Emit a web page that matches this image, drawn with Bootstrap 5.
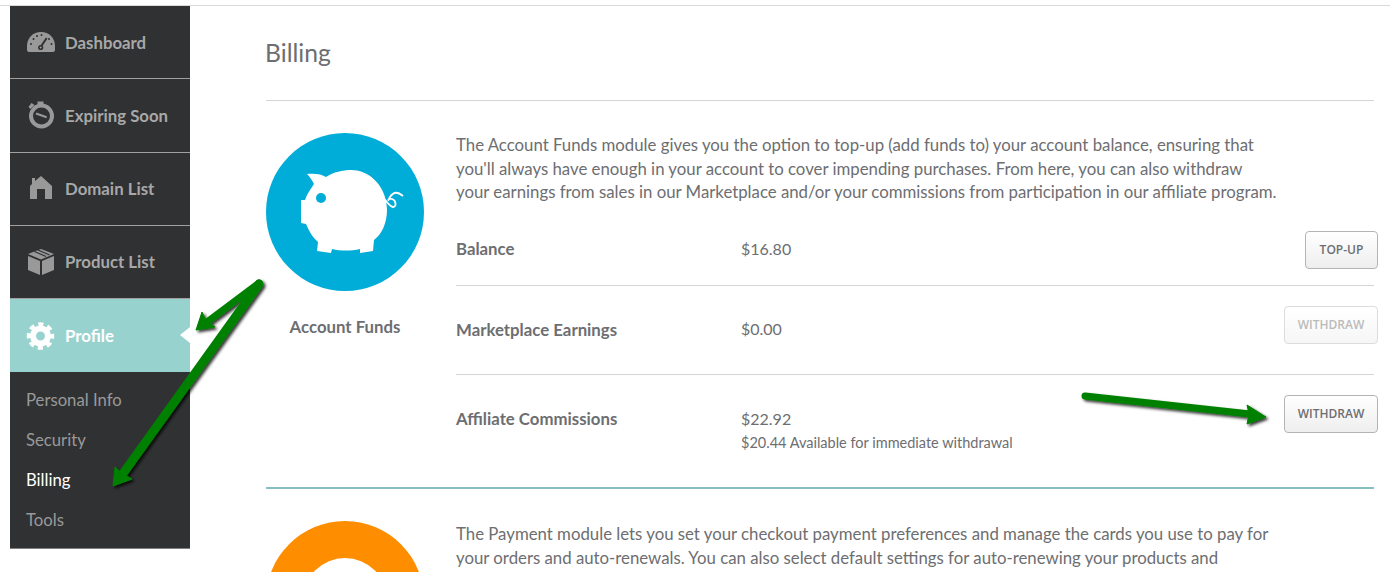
<!DOCTYPE html>
<html lang="en">
<head>
  <meta charset="UTF-8" />
  <title>Billing</title>
  <meta name="viewport" content="width=device-width, initial-scale=1" />
  <link href="https://cdn.jsdelivr.net/npm/bootstrap@5.3.3/dist/css/bootstrap.min.css" rel="stylesheet" />
  <style>
    html, body { height: 572px; overflow: hidden; }
    body {
      font-family: "Lato", "Liberation Sans", sans-serif;
      color: #6d6e71;
      background: #fff;
      position: relative;
    }
    .page-wrap { border-top: 1px solid #d9d9d9; margin-top: 5px; padding-left: 10px; height: 567px; overflow: hidden; }
    .side-menu { width: 180px; background: #303133; height: 543px; flex-shrink: 0; border-bottom: 1px solid #808080; }
    .side-item {
      height: 73.25px; display: flex; align-items: center; gap: 9px; padding-left: 16px;
      color: #a8a8a8; font-weight: 700; font-size: 16.8px; text-decoration: none;
      border-bottom: 1px solid #a0a0a0;
    }
    .side-item svg { width: 30px; height: 30px; flex-shrink: 0; }
    .side-item.active-item { background: #98d2cf; color: #fff; border-bottom: 0; position: relative; height: 73px; }
    .side-item.active-item::after {
      content: ""; position: absolute; right: 0; top: 28px;
      border: 8px solid transparent; border-left: 0; border-right: 10px solid #fff;
    }
    .sub-menu { padding-top: 8px; }
    .sub-item { display: block; height: 40px; line-height: 40px; padding-left: 16px; color: #999; font-size: 16.7px; text-decoration: none; }
    .sub-item.current { color: #fff; }
    .main-area { margin-left: 76px; width: 1108px; }
    .page-title { font-size: 24.7px; font-weight: 400; color: #6d6e71; margin: 0; height: 95px; padding-top: 32px; line-height: 30px; border-bottom: 1px solid #d4d4d4; text-indent: -1px; }
    .module-row { display: flex; gap: 32px; padding-top: 32px; }
    .module-side { width: 158px; flex-shrink: 0; text-align: center; }
    .round-icon { width: 158px; height: 158px; border-radius: 50%; display: block; }
    .round-blue { background: #00acd8; }
    .round-orange { background: #ff8d00; }
    .module-name { font-weight: 700; font-size: 16.8px; margin-top: 26px; line-height: 20px; }
    .module-body { flex: 1; min-width: 0; }
    .module-text { font-size: 16.8px; line-height: 23.6px; margin: 0; color: #6d6e71; white-space: nowrap; }
    .module-text.pay-text { padding-top: 1px; line-height: 24px; }
    .fund-row { display: flex; align-items: flex-start; border-bottom: 1px solid #d4d4d4; }
    .fund-row.last-row { border-bottom: 0; }
    .fund-label { width: 285px; font-weight: 700; font-size: 16.8px; line-height: 20px; flex-shrink: 0; }
    .fund-value { font-size: 16px; line-height: 20px; flex: 1; }
    .fund-note { font-size: 14.5px; line-height: 18px; margin-top: 5px; }
    .fund-btn {
      width: 94px; height: 38px; padding: 0; font-family: "Open Sans", "Liberation Sans", sans-serif; font-size: 12px; font-weight: 600; color: #6d6e71;
      background: linear-gradient(#fff, #eeeeee); border: 1px solid #b4b4b4; border-radius: 4px;
      margin-right: -4px; flex-shrink: 0; text-transform: uppercase;
    }
    .fund-btn.top-btn { width: 73px; }
    .fund-btn:disabled { color: #bbb; border-color: #dcdcdc; background: linear-gradient(#fff, #f6f6f6); opacity: 1; }
    .row-one { height: 82px; padding-top: 27px; }
    .row-one .fund-label, .row-one .fund-value { padding-top: 8px; }
    .row-two { height: 89px; padding-top: 20px; }
    .row-two .fund-label { padding-top: 14px; }
    .row-two .fund-value { padding-top: 13px; }
    .row-three { height: 113px; padding-top: 20px; }
    .row-three .fund-label, .row-three .fund-value { padding-top: 14px; }
    .module-split { border-top: 2px solid #87bfc0; margin: -1px 0 0; opacity: 1; }
    .arrow-layer { position: absolute; left: 0; top: 0; width: 1390px; height: 572px; pointer-events: none; }
  </style>
</head>
<body>
  <div class="page-wrap d-flex">
    <nav class="side-menu">
      <a class="side-item" href="#">
        <svg viewBox="0 0 30 30"><path fill="#999" d="M1 23v-4C1 11 7 5 15 5s14 6 14 14v4c0 1-1 2-2 2H3c-1 0-2-1-2-2z"/><path fill="none" stroke="#303133" stroke-width="2" d="M15 19.500 20.700 11"/><circle cx="14.700" cy="20.500" r="2.600" fill="#303133"/><circle cx="14.700" cy="20.500" r="1" fill="#999"/><g fill="#303133"><circle cx="5" cy="17" r="1"/><circle cx="7.500" cy="12" r="1"/><circle cx="11" cy="9" r="1"/><circle cx="15.500" cy="8" r="1"/><circle cx="23" cy="12" r="1"/><circle cx="25.500" cy="17" r="1"/></g></svg>
        Dashboard
      </a>
      <a class="side-item" href="#">
        <svg viewBox="0 0 30 30"><circle cx="15.500" cy="16" r="10.500" fill="none" stroke="#999" stroke-width="4"/><path d="M10 13.500 20.700 17.300" stroke="#999" stroke-width="2" fill="none"/><path fill="#999" d="M11.500 1.500h6v3h-6zM2.500 7l3-4 3 2-4 4z"/></svg>
        Expiring Soon
      </a>
      <a class="side-item" href="#">
        <svg viewBox="0 0 30 30"><path fill="#999" d="M15 2 26 12v13h-7V15h-8v10H4V12l2-2V4h3v3z"/></svg>
        Domain List
      </a>
      <a class="side-item" href="#">
        <svg viewBox="0 0 30 30"><path fill="#999" d="M15 2 28 7 15 12.500 2 7zM2 9l12 5v14L2 23zM28 9 16 14v14l12-5z"/><path fill="none" stroke="#303133" stroke-width="1.200" d="M8.500 4.500 20 9.500M12 3l11.500 5"/></svg>
        Product List
      </a>
      <a class="side-item active-item" href="#">
        <svg viewBox="0 0 30 30"><circle cx="14.500" cy="15" r="7.500" fill="none" stroke="#fff" stroke-width="6"/><circle cx="14.500" cy="15" r="11.500" fill="none" stroke="#fff" stroke-width="4.500" stroke-dasharray="5 4.030" stroke-dashoffset="2.500"/></svg>
        Profile
      </a>
      <div class="sub-menu">
        <a class="sub-item" href="#">Personal Info</a>
        <a class="sub-item" href="#">Security</a>
        <a class="sub-item current" href="#">Billing</a>
        <a class="sub-item" href="#">Tools</a>
      </div>
    </nav>
    <main class="main-area">
      <h1 class="page-title">Billing</h1>
      <section class="module-row">
        <div class="module-side">
          <svg class="round-icon round-blue" viewBox="0 0 158 158">
            <path fill="#fff" d="M41 41C48 40 56 41 60 44 68 39 76 37 85 37 105 37 121 55 121 77 121 91 115 102 108 107L107 118 94 120 94 116C85 118 75 118 66 116L65 120 51 118 52 109C47 105 43 98 40 91L35 90V67L39 67C41 61 44 57 48 51 46 47 44 44 41 41Z"/>
            <circle cx="55" cy="65" r="5" fill="#00acd8"/>
            <path fill="none" stroke="#fff" stroke-width="1.800" d="M116 64C120 66 122 73 127 74 131 74 130 67 126 66 122 65 121 70 124 64 128 58 132 59 137 63"/>
          </svg>
          <div class="module-name">Account Funds</div>
        </div>
        <div class="module-body">
          <p class="module-text">The Account Funds module gives you the option to top-up (add funds to) your account balance, ensuring that<br>you'll always have enough in your account to cover impending purchases. From here, you can also withdraw<br>your earnings from sales in our Marketplace and/or your commissions from participation in our affiliate program.</p>
          <div class="fund-row row-one">
            <div class="fund-label">Balance</div>
            <div class="fund-value">$16.80</div>
            <button class="fund-btn top-btn" type="button">Top-up</button>
          </div>
          <div class="fund-row row-two">
            <div class="fund-label">Marketplace Earnings</div>
            <div class="fund-value">$0.00</div>
            <button class="fund-btn" type="button" disabled>Withdraw</button>
          </div>
          <div class="fund-row row-three last-row">
            <div class="fund-label">Affiliate Commissions</div>
            <div class="fund-value">$22.92<div class="fund-note">$20.44 Available for immediate withdrawal</div></div>
            <button class="fund-btn" type="button">Withdraw</button>
          </div>
        </div>
      </section>
      <hr class="module-split">
      <section class="module-row">
        <div class="module-side">
          <svg class="round-icon round-orange" viewBox="0 0 158 158"><circle cx="79" cy="79" r="42" fill="#fff"/></svg>
        </div>
        <div class="module-body">
          <p class="module-text pay-text">The Payment module lets you set your checkout payment preferences and manage the cards you use to pay for<br>your orders and auto-renewals. You can also select default settings for auto-renewing your products and</p>
        </div>
      </section>
    </main>
  </div>
  <svg class="arrow-layer" viewBox="0 0 1390 572">
    <defs><filter id="arrowShadow" x="-20%" y="-20%" width="140%" height="140%"><feDropShadow dx="2" dy="2" stdDeviation="1.500" flood-color="#000" flood-opacity=".8"/></filter></defs>
    <g filter="url(#arrowShadow)" fill="#008000" stroke="#008000" stroke-linejoin="round">
      <path fill="none" stroke-width="7" stroke-linecap="round" d="M259 283 207 322"/>
      <path stroke-width="1" d="M196 330 202 312 206 320 215 327z"/>
      <path fill="none" stroke-width="9" stroke-linecap="round" d="M259 284 122 475"/>
      <path stroke-width="1" d="M113 486 115 467 123 474 132 479z"/>
      <path fill="none" stroke-width="7" stroke-linecap="round" d="M1085 396 1250 414"/>
      <path stroke-width="1" d="M1266 417 1247 405 1249 414 1247 424z"/>
    </g>
  </svg>
  <script src="https://cdn.jsdelivr.net/npm/bootstrap@5.3.3/dist/js/bootstrap.bundle.min.js"></script>
</body>
</html>
